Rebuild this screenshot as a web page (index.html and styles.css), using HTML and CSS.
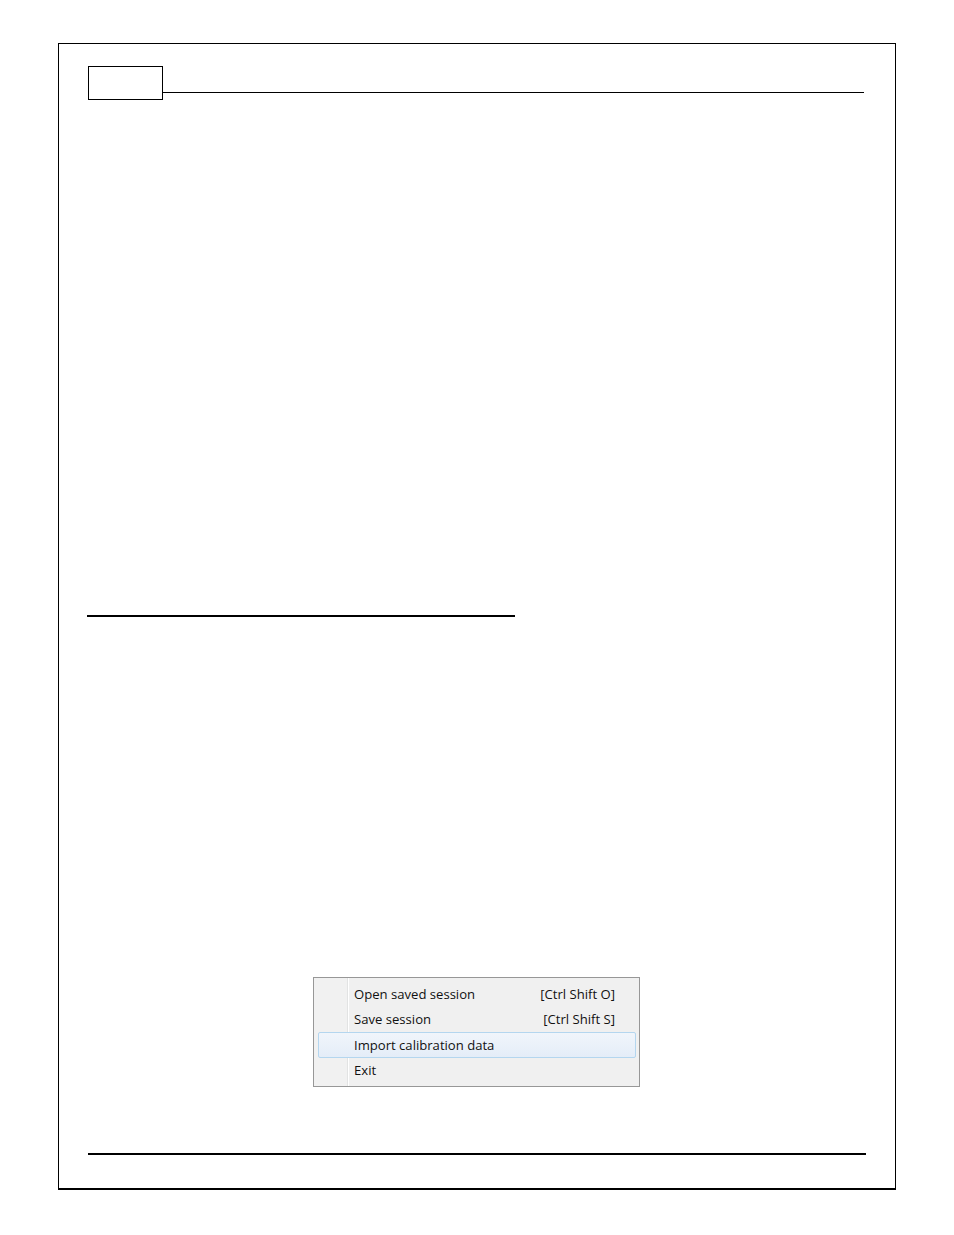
FILE: index.html
```html
<!DOCTYPE html>
<html>
<head>
<meta charset="utf-8">
<link rel="stylesheet" href="styles.css">
</head>
<body>
<div class="page">
  <div class="header">
    <div class="page-box"></div>
    <div class="header-rule"></div>
  </div>
  <div class="section-rule"></div>
  <div class="menu">
    <div class="menu-item"><span class="label">Open saved session</span><span class="shortcut">[Ctrl Shift O]</span></div>
    <div class="menu-item"><span class="label">Save session</span><span class="shortcut">[Ctrl Shift S]</span></div>
    <div class="menu-item hover"><span class="label">Import calibration data</span><span class="shortcut"></span></div>
    <div class="menu-item"><span class="label">Exit</span><span class="shortcut"></span></div>
  </div>
  <div class="footer-rule"></div>
</div>
</body>
</html>
```
FILE: styles.css
```css
html, body {
  margin: 0;
  padding: 0;
  background: #ffffff;
}
body {
  width: 954px;
  height: 1235px;
  font-family: "Open Sans", "Liberation Sans", sans-serif;
}
.page {
  box-sizing: border-box;
  margin: 43px 0 0 58px;
  width: 838px;
  height: 1147px;
  border-top: 1px solid #000;
  border-left: 1px solid #000;
  border-right: 1.5px solid #000;
  border-bottom: 2px solid #000;
  display: flex;
  flex-direction: column;
  align-items: flex-start;
}
.header {
  display: flex;
  align-items: flex-start;
  margin: 22px 0 0 29px;
}
.page-box {
  box-sizing: border-box;
  width: 75px;
  height: 34px;
  border: 1px solid #000;
}
.header-rule {
  width: 701px;
  height: 1px;
  background: #000;
  margin-top: 26px;
}
.section-rule {
  margin: 515px 0 0 28px;
  width: 428px;
  height: 2px;
  background: #000;
}
.menu {
  box-sizing: border-box;
  margin: 360px 0 0 254px;
  width: 327px;
  height: 110px;
  border: 1px solid #979797;
  background: linear-gradient(to right, #f1f1f1 0, #f1f1f1 33px, #e2e3e3 33px, #e2e3e3 34px, #ffffff 34px, #ffffff 35px, #f0f0f0 35px);
  padding: 3px;
  display: flex;
  flex-direction: column;
}
.menu-item {
  box-sizing: border-box;
  height: 25.7px;
  display: flex;
  align-items: center;
  justify-content: space-between;
  padding: 0 20px 0 36px;
  font-size: 13.1px;
  color: #111111;
  border: 1px solid transparent;
  border-radius: 2px;
}
.menu-item.hover {
  border-color: #b4d6ef;
  background: linear-gradient(to bottom, #f0f5fb, #e4edf8);
  margin-left: 1px;
  padding-left: 35px;
}
.footer-rule {
  margin: 66px 0 0 29px;
  width: 778px;
  height: 2px;
  background: #000;
}
```
